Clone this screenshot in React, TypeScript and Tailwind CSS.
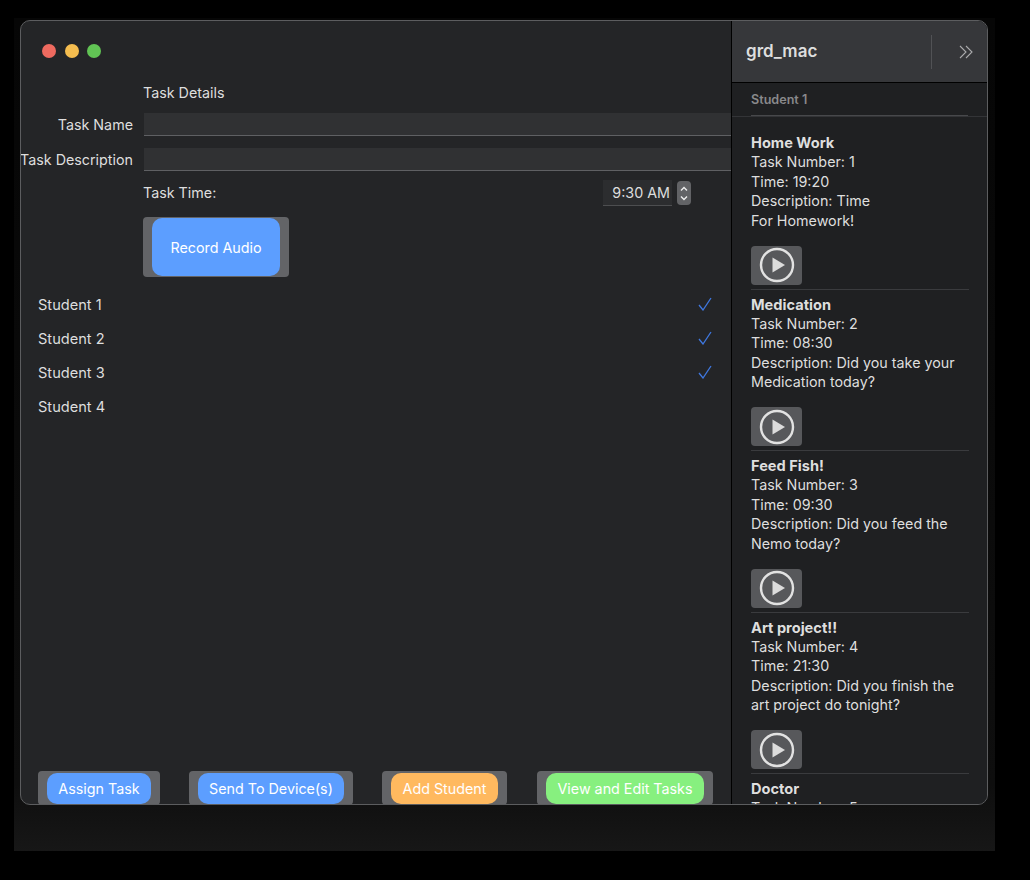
const FONT = "font-['Inter','Liberation_Sans',sans-serif]";

const TASKS = [
  { title: "Home Work", lines: ["Task Number: 1", "Time: 19:20", "Description: Time", "For Homework!"] },
  { title: "Medication", lines: ["Task Number: 2", "Time: 08:30", "Description: Did you take your", "Medication today?"] },
  { title: "Feed Fish!", lines: ["Task Number: 3", "Time: 09:30", "Description: Did you feed the", "Nemo today?"] },
  { title: "Art project!!", lines: ["Task Number: 4", "Time: 21:30", "Description: Did you finish the", "art project do tonight?"] },
  { title: "Doctor", lines: ["Task Number: 5", "Time: 10:00"] },
];

const STUDENTS = [
  { name: "Student 1", checked: true },
  { name: "Student 2", checked: true },
  { name: "Student 3", checked: true },
  { name: "Student 4", checked: false },
];

const ACTIONS = [
  { label: "Assign Task", outer: "w-[122px]", color: "bg-[#5c9eff]" },
  { label: "Send To Device(s)", outer: "w-[164px]", color: "bg-[#5c9eff]" },
  { label: "Add Student", outer: "w-[125px]", color: "bg-[#ffb95f]" },
  { label: "View and Edit Tasks", outer: "w-[176px] ml-[1px]", color: "bg-[#87f07f]" },
];

function Field({ label }: { label: string }) {
  return (
    <div className="flex items-center h-[23px]">
      <span className="w-[112px] shrink-0 flex justify-end whitespace-nowrap">{label}</span>
      <div className="ml-[11px] flex-1 h-full bg-[#303133] border-b border-[#5f6063]" />
    </div>
  );
}

function PlayButton() {
  return (
    <div className="w-[51px] h-[39px] rounded-[4px] bg-[#57585b] flex items-center justify-center">
      <svg width="36" height="36" viewBox="0 0 36 36" fill="none">
        <circle cx="18" cy="18" r="16" stroke="#e2e2e2" strokeWidth="2.4" />
        <path d="M13.5 10.5 L26 18 L13.5 25.5 Z" fill="#dcdcdc" />
      </svg>
    </div>
  );
}

export default function App() {
  return (
    <div className={`w-[1030px] h-[880px] bg-black overflow-hidden pt-[18px] pl-[14px] text-[14.3px] text-[#dedede] ${FONT}`}>
      <div className="w-[981px] h-[833px] pt-[2px] pl-[6px] bg-gradient-to-b from-[#060606] via-[#0e0e0e] via-[92%] to-[#171717]">
        <div className="w-[968px] h-[785px] flex rounded-[10px] border border-[#5c5d5f] overflow-hidden bg-[#242527]">
          {/* form side */}
          <div className="w-[710px] shrink-0 flex flex-col">
            <div className="h-[60px] shrink-0 flex items-center gap-[8.5px] pl-[21px]">
              <span className="w-[14px] h-[14px] rounded-full bg-[#ee6a5f]" />
              <span className="w-[14px] h-[14px] rounded-full bg-[#f5bd4f]" />
              <span className="w-[14px] h-[14px] rounded-full bg-[#61c454]" />
            </div>
            <div className="mt-[1px] h-[22px] flex items-center pl-[122px]">Task Details</div>
            <div className="mt-[9px]"><Field label="Task Name" /></div>
            <div className="mt-[12px]"><Field label="Task Description" /></div>
            <div className="mt-[9px] h-[26px] flex items-center pl-[122px] pr-[40px]">
              <span>Task Time:</span>
              <div className="ml-auto w-[69px] h-full bg-[#2c2d2f] border-b border-[#4d4e50] flex items-center justify-end pr-[2px]">9:30 AM</div>
              <div className="ml-[5px] w-[14px] h-[24px] rounded-[4px] bg-[#626366] flex flex-col items-center justify-center gap-[3px]">
                <svg width="8" height="6" viewBox="0 0 8 6" fill="none"><path d="M1 4.5 L4 1.5 L7 4.5" stroke="#eeeeee" strokeWidth="1.4" /></svg>
                <svg width="8" height="6" viewBox="0 0 8 6" fill="none"><path d="M1 1.5 L4 4.5 L7 1.5" stroke="#eeeeee" strokeWidth="1.4" /></svg>
              </div>
            </div>
            <div className="mt-[11px] ml-[122px] w-[146px] h-[60px] rounded-[4px] bg-[#636467] pt-[1px] flex justify-center">
              <div className="w-[128px] h-[58px] pt-[1px] rounded-[10px] bg-[#5c9eff] text-white flex items-center justify-center">Record Audio</div>
            </div>
            <div className="mt-[11px] pl-[17px] pr-[19px] text-[14.6px]">
              {STUDENTS.map((s) => (
                <div key={s.name} className="h-[34px] flex items-center justify-between">
                  <span className="pt-[1px]">{s.name}</span>
                  {s.checked && (
                    <svg className="mb-[2px]" width="14" height="14" viewBox="0 0 14 14" fill="none">
                      <path d="M1 8 L5 13 L13 1" stroke="#3f78e0" strokeWidth="1.3" />
                    </svg>
                  )}
                </div>
              ))}
            </div>
            <div className="mt-auto -mb-[1px] pl-[17px] flex gap-[29px]">
              {ACTIONS.map((a) => (
                <div key={a.label} className={`${a.outer} h-[34px] rounded-[4px] bg-[#636467] pt-[2px] flex justify-center`}>
                  <div className={`${a.color} h-[31px] w-[calc(100%-18px)] rounded-[10px] text-white flex items-center justify-center whitespace-nowrap`}>{a.label}</div>
                </div>
              ))}
            </div>
          </div>
          {/* sidebar */}
          <div className="flex-1 min-w-0 flex flex-col border-l border-black bg-[#1f2022]">
            <div className="h-[62px] shrink-0 flex items-center pl-[14px] bg-[#36373a] border-b border-black">
              <span className="text-[17px] font-semibold">grd_mac</span>
              <div className="ml-auto w-px h-[34px] bg-[#515255]" />
              <svg className="ml-[27px] mr-[14px]" width="14" height="14" viewBox="0 0 14 14" fill="none">
                <path d="M1 1 L7 7 L1 13 M7 1 L13 7 L7 13" stroke="#a9a9ab" strokeWidth="1.1" />
              </svg>
            </div>
            <div className="h-[34px] shrink-0 px-[19px] flex flex-col border-b border-[#333437]">
              <div className="flex-1 pt-[3px] flex items-center text-[12.6px] font-semibold text-[#89898b]">Student 1</div>
              <div className="h-px bg-[#47484b]" />
            </div>
            <div className="flex-1 min-h-0 overflow-hidden pl-[19px] pr-[18px] pt-[16px] leading-[19.4px]">
              {TASKS.map((t, i) => (
                <div key={t.title}>
                  <div className="font-bold text-[14.6px] pt-[1px] h-[19.4px] leading-[19px]">{t.title}</div>
                  {t.lines.map((l) => (
                    <div key={l} className="whitespace-nowrap">{l}</div>
                  ))}
                  {i < 4 && (
                    <>
                      <div className="mt-[15.5px]"><PlayButton /></div>
                      <div className="mt-[4px] mb-[5px] h-px bg-[#3a3b3e]" />
                    </>
                  )}
                </div>
              ))}
            </div>
          </div>
        </div>
      </div>
    </div>
  );
}
